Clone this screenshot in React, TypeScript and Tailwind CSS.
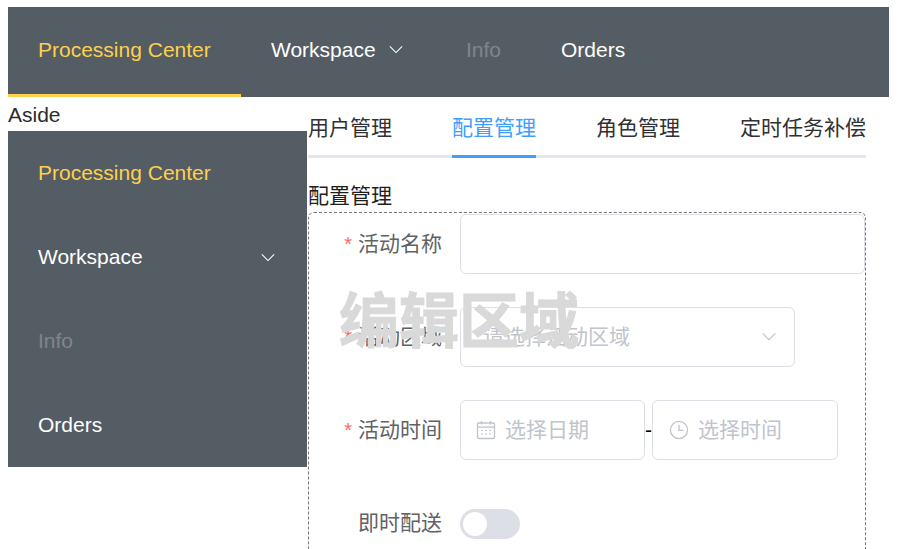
import { useState } from "react";

const tabs = ["用户管理", "配置管理", "角色管理", "定时任务补偿"];

const ChevronDown = ({ className }: { className: string }) => (
  <svg viewBox="0 0 16 10" fill="none" stroke="currentColor" strokeWidth="1.2" className={className}>
    <path d="M1 1.5 8 8.5 15 1.5" />
  </svg>
);

const CalendarIcon = () => (
  <svg viewBox="0 0 20 20" fill="none" stroke="currentColor" strokeWidth="1.3" className="w-[20px] h-[20px] text-[#c0c4cc]">
    <rect x="1.5" y="3" width="17" height="15.5" rx="1" />
    <path d="M1.5 7.2h17M5.5 1v3.4M14.5 1v3.4" />
    <path d="M5 10.5h2M9 10.5h2M13 10.5h2M5 14h2M9 14h2M13 14h2" strokeWidth="1.2" />
  </svg>
);

const ClockIcon = () => (
  <svg viewBox="0 0 20 20" fill="none" stroke="currentColor" strokeWidth="1.3" className="w-[20px] h-[20px] text-[#c0c4cc]">
    <circle cx="10" cy="10" r="8.6" />
    <path d="M10 4.8v5.6h4.6" />
  </svg>
);

function Label({ text, required }: { text: string; required?: boolean }) {
  return (
    <label className="w-[133px] shrink-0 text-right text-[#606266] text-[21px] leading-[60px] whitespace-nowrap">
      {required && <span className="text-[#f56c6c] mr-[6px] text-[20px]">*</span>}
      {text}
    </label>
  );
}

export default function App() {
  const [active] = useState(1);
  return (
    <div className="h-[549px] overflow-hidden pt-[7px] pl-[8px] bg-white text-[21px] text-[#2c2c2c] font-['Liberation_Sans','Noto_Sans_CJK_SC',sans-serif]">
      <header className="flex w-[881px] h-[90px] bg-[#545c64] text-white">
        <div className="flex items-center w-[233px] px-[30px] pb-[2px] text-[#ffd04b] border-b-[3px] border-[#ffd04b] whitespace-nowrap">Processing Center</div>
        <div className="flex items-center w-[195px] px-[30px] pb-[5px]">
          Workspace
          <ChevronDown className="w-[14px] h-[9px] ml-[13px] -mt-[1px]" />
        </div>
        <div className="flex items-center px-[30px] pb-[5px] opacity-25">Info</div>
        <div className="flex items-center px-[30px] pb-[5px]">Orders</div>
      </header>

      <div className="flex">
        <aside className="w-[300px] shrink-0">
          <div className="h-[34px] pt-[6px] leading-[23px]">Aside</div>
          <nav className="w-[299px] bg-[#545c64] text-white">
            <div className="flex items-center h-[84px] px-[30px] text-[#ffd04b]">Processing Center</div>
            <div className="flex items-center justify-between h-[84px] px-[30px] pr-[32px]">
              Workspace
              <ChevronDown className="w-[14px] h-[9px]" />
            </div>
            <div className="flex items-center h-[84px] px-[30px] opacity-25">Info</div>
            <div className="flex items-center h-[84px] px-[30px]">Orders</div>
          </nav>
        </aside>

        <main className="relative w-[558px] shrink-0">
          <div className="flex gap-[60px] h-[61px] pt-[16px] border-b-[3px] border-[#e4e7ed] whitespace-nowrap">
            {tabs.map((t, i) => (
              <div
                key={t}
                className={
                  i === active
                    ? "h-[45px] -mb-[3px] leading-[30px] text-[#409eff] border-b-[3px] border-[#409eff]"
                    : "h-[42px] leading-[30px] text-[#303133]"
                }
              >
                {t}
              </div>
            ))}
          </div>

          <div className="mt-[24px] leading-[28px] h-[30px] text-[#1f1f1f]">配置管理</div>

          <div className="relative h-[400px] border border-dashed border-[#777] rounded-[6px] pt-[1px]">
            <div className="flex h-[60px]">
              <Label text="活动名称" required />
              <div className="ml-[18px] w-[405px] h-[60px] border border-[#dcdfe6] rounded-[6px]" />
            </div>

            <div className="flex h-[60px] mt-[33px]">
              <Label text="活动区域" required />
              <div className="ml-[18px] w-[335px] h-[60px] flex items-center justify-between pl-[22px] pr-[17px] border border-[#dcdfe6] rounded-[6px] text-[#c0c4cc]">
                请选择活动区域
                <ChevronDown className="w-[16px] h-[9px] -mt-[1px]" />
              </div>
            </div>

            <div className="flex h-[60px] mt-[33px]">
              <Label text="活动时间" required />
              <div className="ml-[18px] flex items-center">
                <div className="w-[185px] h-[60px] flex items-center gap-[9px] pl-[15px] border border-[#dcdfe6] rounded-[6px] text-[#c0c4cc]">
                  <CalendarIcon />
                  选择日期
                </div>
                <span className="w-[7px] text-black">-</span>
                <div className="w-[186px] h-[60px] flex items-center gap-[9px] pl-[16px] border border-[#dcdfe6] rounded-[6px] text-[#c0c4cc]">
                  <ClockIcon />
                  选择时间
                </div>
              </div>
            </div>

            <div className="flex h-[60px] mt-[33px]">
              <Label text="即时配送" />
              <div className="ml-[18px] mt-[16px] w-[60px] h-[30px] rounded-full bg-[#dcdfe6] p-[3px]">
                <div className="w-[24px] h-[24px] rounded-full bg-white" />
              </div>
            </div>

            <div className="absolute left-[30px] top-[75px] text-[60px] leading-[70px] font-bold text-[#d9d9d9] [-webkit-text-stroke:1px_#d9d9d9] whitespace-nowrap">
              编辑区域
            </div>
          </div>
        </main>
      </div>
    </div>
  );
}
